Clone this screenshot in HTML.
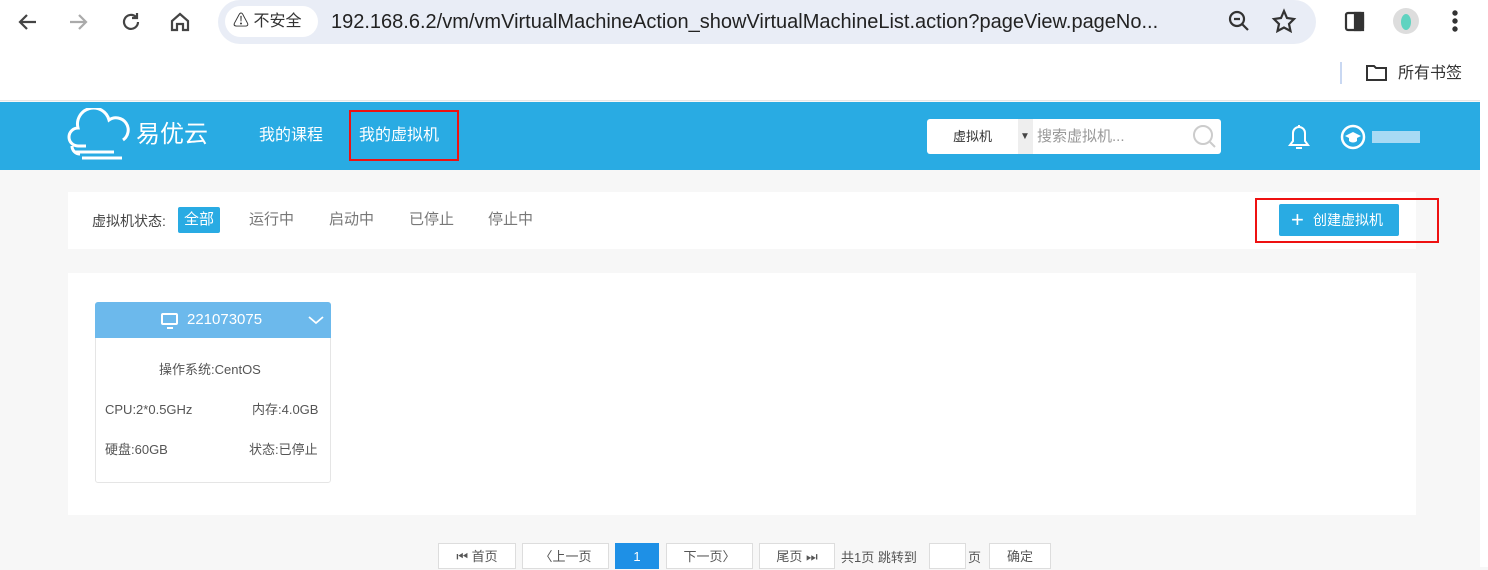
<!DOCTYPE html>
<html><head><meta charset="utf-8"><style>
*{margin:0;padding:0;box-sizing:border-box}
body{width:1488px;height:567px;overflow:hidden;background:#f7f7f7;font-family:"Liberation Sans","Noto Sans CJK SC",sans-serif;position:relative;color:#666;line-height:20px}
.abs{position:absolute}
.chrome{left:0;top:0;width:1488px;height:101px;background:#fff}
.url{left:218px;top:0;width:1098px;height:44px;background:#e9edf6;border-radius:22px}
.warn{left:225px;top:6px;width:93px;height:31px;background:#fff;border-radius:16px;font-size:16px;color:#333;line-height:31px;padding-left:8px}
.urltext{left:331px;top:10px;font-size:20px;color:#222;white-space:nowrap;line-height:24px}
.hdr{left:0;top:102px;width:1480px;height:68px;background:#29abe3}
.nav{color:#fff;font-size:16px;top:126px}
.box{background:#fff}
.pg{top:543px;height:26px;border:1px solid #ddd;background:#fff;font-size:13px;color:#555;text-align:center;line-height:26px}
.t13{font-size:13px;color:#555}
</style></head><body>
<div class="abs chrome"></div>
<svg class="abs" style="left:16px;top:10px" width="190" height="24" viewBox="0 0 190 24" fill="none" stroke-width="2.2">
<path d="M20 12H5M11 5 4 12l7 7" stroke="#444"/>
<path d="M54 12h15M63 5l7 7-7 7" stroke="#aaa"/>
<path d="M120 7a7 7 0 1 0 2 5M121 3v5h-5" stroke="#444"/>
<path d="M156 20v-9l8-7 8 7v9h-5v-6h-6v6z" stroke="#444"/>
</svg>
<div class="abs url"></div>
<div class="abs warn">⚠ 不安全</div>
<div class="abs urltext">192.168.6.2/vm/vmVirtualMachineAction_showVirtualMachineList.action?pageView.pageNo...</div>
<svg class="abs" style="left:1226px;top:8px" width="240" height="28" viewBox="0 0 240 28" fill="none" stroke="#333" stroke-width="2.2">
<circle cx="11" cy="11" r="7"/><path d="M16 16l6 6M8 11h6"/>
<path d="M58 3l3 7 7 1-5 5 1.5 7-6.5-3.5L51.5 23 53 16l-5-5 7-1z"/>
<rect x="120" y="5" width="17" height="17" rx="2"/><rect x="129" y="5" width="8" height="17" fill="#333"/>
<circle cx="180" cy="13" r="13" fill="#ddd" stroke="none"/><ellipse cx="180" cy="14" rx="5" ry="8" fill="#5fd3c0" stroke="none"/>
<circle cx="229" cy="5" r="1.6" fill="#333"/><circle cx="229" cy="13" r="1.6" fill="#333"/><circle cx="229" cy="21" r="1.6" fill="#333"/>
</svg>
<div class="abs" style="left:1340px;top:62px;width:2px;height:22px;background:#c9d8f2"></div>
<svg class="abs" style="left:1366px;top:64px" width="22" height="18" fill="none" stroke="#333" stroke-width="2"><path d="M1 2h7l2 2h10v12H1z"/></svg>
<div class="abs" style="left:1398px;top:64px;font-size:16px;color:#333">所有书签</div>
<div class="abs" style="left:0;top:100px;width:1480px;height:1px;background:#e6e6e6"></div>
<div class="abs" style="left:1480px;top:100px;width:8px;height:467px;background:#fff"></div>

<div class="abs hdr"></div>
<svg class="abs" style="left:66px;top:108px" width="66" height="56" fill="none" stroke="#fff" stroke-width="3"><path d="M20 38H12a9 9 0 0 1 0-18 16 16 0 0 1 31-8 12 12 0 0 1 14 20M8 44h40M16 50h40M6 38a8 8 0 0 0 8 8"/></svg>
<div class="abs" style="left:136px;top:120px;font-size:24px;color:#fff;line-height:30px">易优云</div>
<div class="abs nav" style="left:259px">我的课程</div>
<div class="abs nav" style="left:359px">我的虚拟机</div>
<div class="abs" style="left:349px;top:110px;width:110px;height:51px;border:2px solid #e11"></div>
<div class="abs box" style="left:927px;top:119px;width:294px;height:35px;border-radius:3px"></div>
<div class="abs" style="left:1018px;top:119px;width:15px;height:35px;background:#eee"></div>
<div class="abs" style="left:953px;top:127px;font-size:13px;color:#333">虚拟机</div>
<div class="abs" style="left:1020px;top:127px;font-size:10px;color:#444">▼</div>
<div class="abs" style="left:1037px;top:127px;font-size:15px;color:#999">搜索虚拟机...</div>
<svg class="abs" style="left:1192px;top:124px" width="26" height="26" fill="none" stroke="#ccc" stroke-width="2"><circle cx="11" cy="11" r="9"/><path d="M18 18l5 5"/></svg>
<svg class="abs" style="left:1286px;top:122px" width="26" height="30" fill="none" stroke="#fff" stroke-width="2"><path d="M4 23h18l-3-4v-8a6 6 0 0 0-12 0v8zM10 26h6M13 3v2"/></svg>
<svg class="abs" style="left:1340px;top:124px" width="26" height="26"><circle cx="13" cy="13" r="11" fill="none" stroke="#fff" stroke-width="2.5"/><path d="M5 12l8-4 8 4-8 4z" fill="#fff"/><path d="M9 14v3c2 2 6 2 8 0v-3" fill="#fff"/></svg>
<div class="abs" style="left:1372px;top:131px;width:48px;height:12px;background:#c8e6f8;opacity:.8"></div>

<div class="abs box" style="left:68px;top:192px;width:1348px;height:57px"></div>
<div class="abs" style="left:92px;top:211px;font-size:14px;color:#444">虚拟机状态:</div>
<div class="abs" style="left:178px;top:207px;width:42px;height:26px;background:#29abe3;color:#fff;font-size:15px;line-height:26px;text-align:center;border-radius:2px">全部</div>
<div class="abs" style="left:249px;top:210px;font-size:15px;color:#777">运行中</div>
<div class="abs" style="left:329px;top:210px;font-size:15px;color:#777">启动中</div>
<div class="abs" style="left:409px;top:210px;font-size:15px;color:#777">已停止</div>
<div class="abs" style="left:488px;top:210px;font-size:15px;color:#777">停止中</div>
<div class="abs" style="left:1279px;top:204px;width:120px;height:32px;background:#29abe3;border-radius:2px;color:#fff;font-size:14px;line-height:32px;padding-left:34px">创建虚拟机</div>
<div class="abs" style="left:1291px;top:209px;color:#fff;font-size:22px;line-height:22px">+</div>
<div class="abs" style="left:1255px;top:198px;width:184px;height:45px;border:2px solid #e11"></div>

<div class="abs box" style="left:68px;top:273px;width:1348px;height:242px"></div>
<div class="abs box" style="left:95px;top:302px;width:236px;height:181px;border:1px solid #e5e5e5;border-radius:3px"></div>
<div class="abs" style="left:95px;top:302px;width:236px;height:36px;background:#6cb9ec;border-radius:3px 3px 0 0"></div>
<svg class="abs" style="left:160px;top:312px" width="20" height="18" fill="none" stroke="#fff" stroke-width="2"><rect x="2" y="2" width="15" height="10" rx="1"/><path d="M7 16h6"/></svg>
<div class="abs" style="left:187px;top:310px;color:#fff;font-size:15px">221073075</div>
<svg class="abs" style="left:307px;top:314px" width="18" height="12" fill="none" stroke="#fff" stroke-width="1.8"><path d="M2 3l7 6 7-6"/></svg>
<div class="abs t13" style="left:159px;top:360px">操作系统:CentOS</div>
<div class="abs t13" style="left:105px;top:400px">CPU:2*0.5GHz</div>
<div class="abs t13" style="left:252px;top:400px">内存:4.0GB</div>
<div class="abs t13" style="left:105px;top:440px">硬盘:60GB</div>
<div class="abs t13" style="left:249px;top:440px">状态:已停止</div>

<div class="abs pg" style="left:438px;width:78px">⏮ 首页</div>
<div class="abs pg" style="left:522px;width:87px">〈上一页</div>
<div class="abs pg" style="left:615px;width:44px;background:#1e90e6;border-color:#1e90e6;color:#fff">1</div>
<div class="abs pg" style="left:666px;width:87px">下一页〉</div>
<div class="abs pg" style="left:759px;width:76px">尾页 ⏭</div>
<div class="abs" style="left:841px;top:548px;font-size:13px;color:#555">共1页 跳转到</div>
<div class="abs pg" style="left:929px;width:37px"></div>
<div class="abs" style="left:968px;top:548px;font-size:13px;color:#555">页</div>
<div class="abs pg" style="left:989px;width:62px">确定</div>
</body></html>
